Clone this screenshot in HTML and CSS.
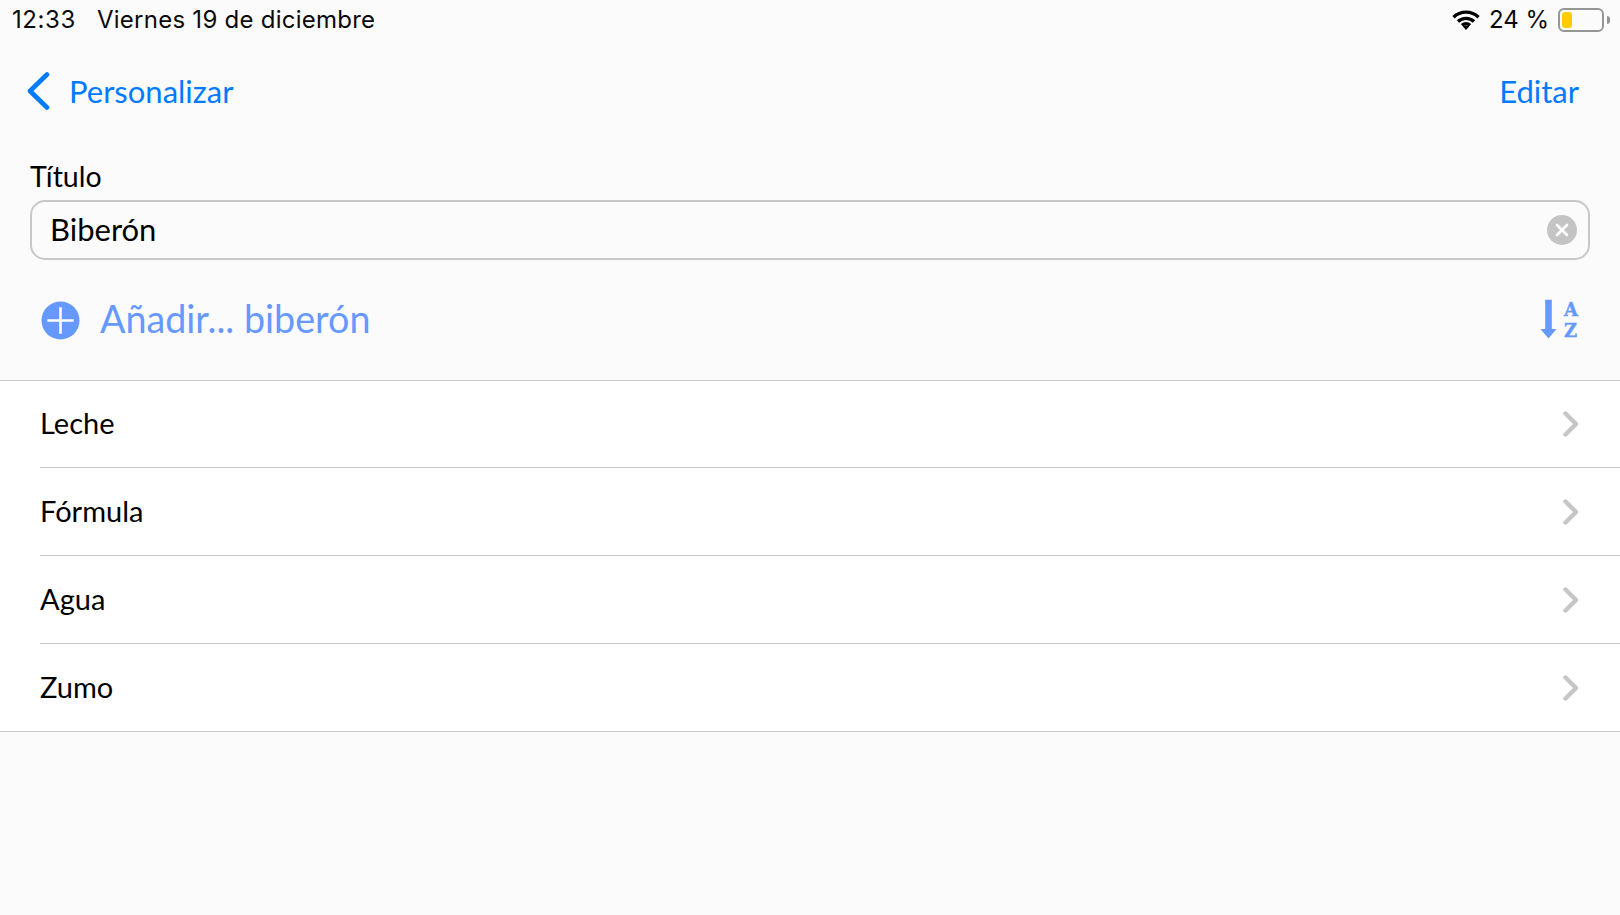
FILE: index.html
```html
<!DOCTYPE html>
<html lang="es">
<head>
<meta charset="utf-8">
<title>Biberón</title>
<link rel="stylesheet" href="styles.css">
</head>
<body>
<div class="page">
  <header class="status">
    <span class="time">12:33</span>
    <span class="date">Viernes 19 de diciembre</span>
    <svg class="wifi" viewBox="0 0 28 20" aria-hidden="true"><path d="M1.5 7.2 A18 18 0 0 1 26.5 7.2" /><path d="M6 11.6 A11.6 11.6 0 0 1 22 11.6" /><path d="M10 15.3 A6 6 0 0 1 18 15.3" /><polygon class="wifi-dot" points="14,20 10.8,16.4 12,15.5 16,15.5 17.2,16.4" /></svg>
    <span class="percent">24 %</span>
    <span class="battery"><span class="battery-level"></span></span>
    <span class="battery-tip"></span>
  </header>
  <nav class="nav">
    <a class="back">
      <svg class="back-icon" viewBox="0 0 24 38" aria-hidden="true"><path d="M21 2.5 L4 19 L21 35.5" /></svg>
      <span>Personalizar</span>
    </a>
    <a class="edit">Editar</a>
  </nav>
  <section class="field">
    <label class="field-label">Título</label>
    <div class="input">
      <span class="input-text">Biberón</span>
      <span class="clear"><svg viewBox="0 0 30 30" aria-hidden="true"><path d="M10 10 L20 20 M20 10 L10 20" /></svg></span>
    </div>
  </section>
  <div class="add-row">
    <svg class="add-icon" viewBox="0 0 40 40" aria-hidden="true"><circle cx="20" cy="20" r="19.5" /><path d="M6.5 20 H33.5 M20 6.5 V33.5" /></svg>
    <span class="add-text">Añadir... biberón</span>
    <span class="sort">
      <svg class="sort-arrow" viewBox="0 0 18 42" aria-hidden="true"><path d="M5.5 0 H12.5 V31 H17.5 L9 41 L0.5 31 H5.5 Z" /></svg>
      <span class="sort-letters"><span>A</span><span>Z</span></span>
    </span>
  </div>
  <ul class="list">
    <li class="row"><div class="row-inner"><span class="row-text">Leche</span><svg class="chev" viewBox="0 0 16 26" aria-hidden="true"><path d="M2.5 2.5 L13 13 L2.5 23.5" /></svg></div></li>
    <li class="row"><div class="row-inner"><span class="row-text">Fórmula</span><svg class="chev" viewBox="0 0 16 26" aria-hidden="true"><path d="M2.5 2.5 L13 13 L2.5 23.5" /></svg></div></li>
    <li class="row"><div class="row-inner"><span class="row-text">Agua</span><svg class="chev" viewBox="0 0 16 26" aria-hidden="true"><path d="M2.5 2.5 L13 13 L2.5 23.5" /></svg></div></li>
    <li class="row"><div class="row-inner"><span class="row-text">Zumo</span><svg class="chev" viewBox="0 0 16 26" aria-hidden="true"><path d="M2.5 2.5 L13 13 L2.5 23.5" /></svg></div></li>
  </ul>
</div>
</body>
</html>
```
FILE: styles.css
```css
* { box-sizing: border-box; }
html, body { margin: 0; padding: 0; }
body {
  background: #fbfbfb;
  color: #000;
  font-family: "Lato", "Liberation Sans", sans-serif;
}
.page { width: 1620px; height: 915px; overflow: hidden; background: #fbfbfb; }

.status {
  height: 40px;
  display: flex;
  align-items: center;
  padding: 0 10px 0 12px;
  font-family: "Inter", "Liberation Sans", sans-serif;
  font-size: 24px;
  color: #0a0a0a;
}
.time { width: 85px; letter-spacing: 0.6px; margin-bottom: 2px; }
.date { flex: 1; letter-spacing: 0.25px; margin-bottom: 2px; }
.wifi { width: 28px; height: 20px; margin-right: 9px; }
.wifi path { fill: none; stroke: #000; stroke-width: 3.4; }
.wifi-dot { fill: #000; }
.percent { margin-right: 9px; margin-bottom: 2px; }
.battery {
  width: 46px; height: 24px;
  border: 2px solid #969696;
  border-radius: 6px;
  padding: 2px;
  display: flex;
}
.battery-level { width: 10px; background: #ffcc00; border-radius: 3px; }
.battery-tip { width: 3px; height: 8px; background: #969696; border-radius: 0 3px 3px 0; margin-left: 3px; }

.nav {
  height: 102px;
  display: flex;
  align-items: center;
  justify-content: space-between;
  padding: 0 41px 0 26px;
  font-size: 31px;
  color: #007aff;
}
.back { display: flex; align-items: center; gap: 19px; }
.back-icon { width: 24px; height: 38px; }
.back-icon path { fill: none; stroke: #007aff; stroke-width: 4.6; stroke-linecap: round; stroke-linejoin: round; }

.field { padding: 0 30px 0 30px; }
.field-label { display: block; font-size: 28.5px; line-height: 36px; margin-top: 16px; height: 42px; }
.input {
  height: 60px;
  border: 2px solid #c8c8c8;
  border-radius: 15px;
  display: flex;
  align-items: center;
  justify-content: space-between;
  padding: 0 11px 0 18px;
  font-size: 31px;
}
.input-text { margin-bottom: 2px; }
.clear {
  width: 30px; height: 30px;
  border-radius: 50%;
  background: #c4c4c4;
  display: flex;
}
.clear svg { width: 30px; height: 30px; }
.clear path { fill: none; stroke: #fff; stroke-width: 2.6; stroke-linecap: round; }

.add-row {
  height: 120px;
  display: flex;
  align-items: center;
  padding: 0 42px 0 41px;
  color: #6699ff;
  font-size: 37.7px;
}
.add-icon { width: 39px; height: 39px; margin-right: 20px; }
.add-icon circle { fill: #6699ff; }
.add-icon path { stroke: #fff; stroke-width: 2.6; fill: none; }
.add-text { flex: 1; margin-bottom: 4px; }
.sort { display: flex; align-items: flex-start; gap: 7px; margin-bottom: 1px; }
.sort-arrow { width: 17px; height: 41px; fill: #6699ff; }
.sort-letters {
  display: flex; flex-direction: column;
  font-family: "DejaVu Serif", "Liberation Serif", serif;
  font-weight: 700;
  font-size: 18px;
  line-height: 21px;
  -webkit-text-stroke: 0.4px #6699ff;
}

.list {
  list-style: none;
  margin: 0; padding: 0;
  background: #fff;
  border-top: 1px solid #c8c8c8;
  border-bottom: 1px solid #c8c8c8;
}
.row { padding-left: 40px; font-size: 29px; }
.row-inner {
  height: 88px;
  display: flex;
  align-items: center;
  justify-content: space-between;
  padding-right: 41px;
  border-bottom: 1px solid #c8c8c8;
}
.row:first-child .row-inner { height: 87px; }
.row:last-child .row-inner { border-bottom: 0; height: 87px; }
.row-text { margin-bottom: 2px; }
.row:first-child .row-text { margin-bottom: 3px; }
.chev { width: 16px; height: 26px; }
.chev path { fill: none; stroke: #c6c6c8; stroke-width: 4.4; stroke-linecap: round; stroke-linejoin: round; }
```
